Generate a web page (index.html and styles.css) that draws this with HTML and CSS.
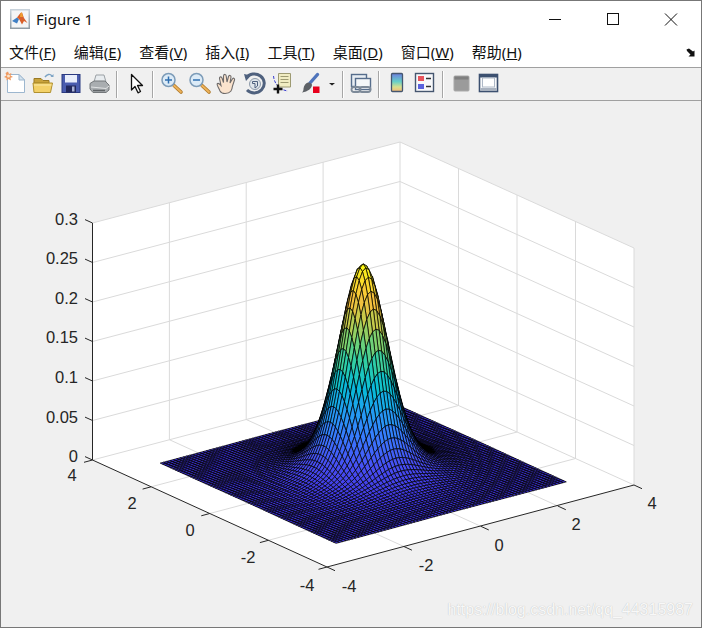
FILE: index.html
```html
<!DOCTYPE html>
<html lang="zh">
<head>
<meta charset="utf-8">
<title>Figure 1</title>
<link rel="stylesheet" href="styles.css">
</head>
<body>
<div class="window">
  <header class="titlebar">
    <svg class="app-icon" width="20" height="20" viewBox="0 0 20 20">
      <defs><linearGradient id="frameG" x1="0" y1="0" x2="0" y2="1"><stop offset="0" stop-color="#c9d3dc"/><stop offset="1" stop-color="#8f9aa3"/></linearGradient></defs>
      <rect width="20" height="20" fill="url(#frameG)"/>
      <rect x="1.5" y="1.5" width="17" height="17" fill="#f4f5f6"/>
      <path d="M2 12 L7 8.5 L9 10 L7 14.5 Z" fill="#3f7fc4"/>
      <path d="M7 8.5 L10.5 4 L12 3.5 L14 9 L17.5 14 L14 12 L12 15.5 L9 10 Z" fill="#d9602a"/>
      <path d="M10.5 4 L12 3.5 L13 8 L10 8 Z" fill="#f0a030"/>
    </svg>
    <span class="title">Figure 1</span>
    <div class="controls">
      <div class="ctl"><svg width="14" height="14" viewBox="0 0 14 14"><path d="M1 7.5H13" stroke="#111" fill="none"/></svg></div>
      <div class="ctl"><svg width="14" height="14" viewBox="0 0 14 14"><rect x="1.5" y="1.5" width="11" height="11" stroke="#111" fill="none"/></svg></div>
      <div class="ctl"><svg width="14" height="14" viewBox="0 0 14 14"><path d="M1 1.5L13 13.5M13 1.5L1 13.5" stroke="#111" fill="none"/></svg></div>
    </div>
  </header>

  <nav class="menubar">
    <span class="menu">文件(<u>F</u>)</span>
    <span class="menu">编辑(<u>E</u>)</span>
    <span class="menu">查看(<u>V</u>)</span>
    <span class="menu">插入(<u>I</u>)</span>
    <span class="menu">工具(<u>T</u>)</span>
    <span class="menu">桌面(<u>D</u>)</span>
    <span class="menu">窗口(<u>W</u>)</span>
    <span class="menu">帮助(<u>H</u>)</span>
    <svg class="dock" width="10" height="9" viewBox="0 0 10 9"><path d="M0.5 1.5L3 0.5L7 3.5L8.5 2.5V8.5H2.5L4.5 6.5L1 3Z" fill="#111"/></svg>
  </nav>

  <div class="toolbar">
    <svg class="tool" viewBox="0 0 28 28">
      <path d="M6.500 4.500H18L23.500 10V22.500H6.500Z" fill="#fff" stroke="#9db7cf"/>
      <path d="M18 4.500V10H23.500Z" fill="#d5e3ee" stroke="#9db7cf"/>
      <path d="M7 1.500L8 4L10.500 3L9.500 5.500L12 7L9.500 7.800L10 10.500L7.500 9L5.500 10.500L5.500 8L3 7L5.500 5.500L4.500 3Z" fill="#ef9a60"/>
      <circle cx="7.500" cy="6" r="1.500" fill="#fbe3c9"/>
    </svg>
    <svg class="tool" viewBox="0 0 28 28">
      <path d="M5 8.500H12L14 10.500H20V13H5Z" fill="#c9a33b" stroke="#9a7a25"/>
      <path d="M5 22.500L4 13H23.500L21.500 22.500Z" fill="#f3d168" stroke="#b0902f"/>
      <path d="M5 15H22.500" stroke="#fbeaa6"/>
      <path d="M16 7C18 4 21 3.500 23 6" fill="none" stroke="#7aa2c4" stroke-width="1.400"/>
      <path d="M21.500 7H24.500V4Z" fill="#7aa2c4"/>
    </svg>
    <svg class="tool" viewBox="0 0 28 28">
      <rect x="5" y="4.500" width="18" height="18" fill="#4a5cae" stroke="#2b3a80"/>
      <rect x="8" y="5" width="12" height="7.500" fill="#e9eefb"/>
      <rect x="9" y="15.500" width="10" height="7" fill="#22285c"/>
      <rect x="15" y="16.500" width="2.500" height="5" fill="#aab2d6"/>
    </svg>
    <svg class="tool" viewBox="0 0 28 28">
      <path d="M9 12L11 5H19L21 12Z" fill="#e8ecef" stroke="#9aa0a5"/>
      <path d="M5 13.500L9 11H20L24 15V20L21 22.500H8L5 19Z" fill="#a9adb0" stroke="#74787b"/>
      <path d="M6 17L21 18.500L24 16" stroke="#e0e2e3" fill="none"/>
      <path d="M8 20.500H20" stroke="#5f6366" stroke-width="1.500"/>
    </svg>
    <i class="sep"></i>
    <svg class="tool" viewBox="0 0 28 28">
      <path d="M10.500 4.500V20L14 16.500L17 22.800L19.500 21.500L16.500 15.500H21.500Z" fill="#fff" stroke="#111" stroke-width="1.300" stroke-linejoin="round"/>
    </svg>
    <i class="sep"></i>
    <svg class="tool" viewBox="0 0 28 28">
      <path d="M17 15.500L24 22" stroke="#b07a2a" stroke-width="3.600" stroke-linecap="round"/>
      <path d="M17 15.500L24 22" stroke="#eeb35b" stroke-width="1.800" stroke-linecap="round"/>
      <circle cx="11.500" cy="10" r="6.500" fill="#dcebf7" stroke="#7d9cb8" stroke-width="1.500"/>
      <path d="M8 10H15M11.500 6.500V13.500" stroke="#2f6fb0" stroke-width="1.500"/>
    </svg>
    <svg class="tool" viewBox="0 0 28 28">
      <path d="M17 15.500L24 22" stroke="#b07a2a" stroke-width="3.600" stroke-linecap="round"/>
      <path d="M17 15.500L24 22" stroke="#eeb35b" stroke-width="1.800" stroke-linecap="round"/>
      <circle cx="11.500" cy="10" r="6.500" fill="#dcebf7" stroke="#7d9cb8" stroke-width="1.500"/>
      <path d="M8 10H15" stroke="#2f6fb0" stroke-width="1.500"/>
    </svg>
    <svg class="tool" viewBox="0 0 28 28">
      <path d="M7 21C5.500 17 3 14.500 4.500 13.500C6 12.800 7.500 15 8 15.500L6.500 8.500C6.300 6.500 8.500 6.300 9 8L10.500 12.500L10.500 6C10.800 3.800 13 4 13.200 6L14 12L15.500 6.500C16 4.800 18.200 5.200 18 7L17 13L19.500 8.800C20.600 7.500 22 8.500 21.500 10L19.500 16C19 20 18 23.500 12 23.500C9.500 23.500 8 23 7 21Z" fill="#fbe3cd" stroke="#6d6a6a" stroke-width="1.100"/>
    </svg>
    <svg class="tool" viewBox="0 0 28 28">
      <path d="M5 8A10 9.500 0 1 1 6 20" fill="none" stroke="#4f617e" stroke-width="3"/>
      <path d="M3 4L10 5.500L5 11Z" fill="#4f617e"/>
      <circle cx="14" cy="14" r="5.500" fill="#dfe5ea" stroke="#8e9bab"/>
      <path d="M11.500 11.500H16.500V16L14 18V13.500H11.500Z" fill="none" stroke="#4f617e"/>
    </svg>
    <svg class="tool" viewBox="0 0 28 28">
      <path d="M4.500 6C5 13 10 20 19 21" fill="none" stroke="#3a3fd0" stroke-dasharray="3 1.500"/>
      <path d="M9.500 3.500H21.500V17H9.500Z" fill="#f0ecc2" stroke="#9d9a72"/>
      <path d="M11.500 6.500H19.500M11.500 9.500H19.500M11.500 12.500H19.500" stroke="#9d9a72"/>
      <path d="M9 14.500V23.500M4.500 19H13.500" stroke="#111" stroke-width="2.400"/>
    </svg>
    <svg class="tool" viewBox="0 0 28 28">
      <path d="M13 13L20.500 4.500" stroke="#4f74bb" stroke-width="3.400" stroke-linecap="round"/>
      <path d="M7 16.500C9 11.500 13 11.500 15 14.500C15 18.500 11 21.500 5 22.500C7 21 6 19 7 16.500Z" fill="#5d6166"/>
      <rect x="16" y="16.500" width="6.500" height="6.500" fill="#e8001c"/>
    </svg>
    <svg class="tool-arrow" width="14" height="28" viewBox="0 0 14 28"><path d="M4 13H10L7 15.500Z" fill="#222"/></svg>
    <i class="sep"></i>
    <svg class="tool" viewBox="0 0 28 28">
      <rect x="4.500" y="4.500" width="15" height="12" fill="#e7edf3" stroke="#566d8c" stroke-width="1.400"/>
      <rect x="8.500" y="8.500" width="15" height="11" fill="#f3f6f8" stroke="#566d8c" stroke-width="1.400"/>
      <rect x="4.500" y="17" width="9" height="5" rx="2.500" fill="none" stroke="#7d8a99" stroke-width="1.800"/>
      <rect x="12.500" y="17" width="11" height="5" rx="2.500" fill="none" stroke="#7d8a99" stroke-width="1.800"/>
    </svg>
    <i class="sep"></i>
    <svg class="tool" viewBox="0 0 28 28">
      <defs><linearGradient id="cbarG" x1="0" y1="0" x2="0" y2="1"><stop offset="0" stop-color="#6d7fe0"/><stop offset=".45" stop-color="#66cfc8"/><stop offset=".75" stop-color="#d8e08e"/><stop offset="1" stop-color="#f5b878"/></linearGradient></defs>
      <rect x="8.500" y="3.500" width="11" height="18" rx="1" fill="url(#cbarG)" stroke="#45566f" stroke-width="1.300"/>
    </svg>
    <svg class="tool" viewBox="0 0 28 28">
      <rect x="4.500" y="3.500" width="18" height="18" fill="#f7f8fa" stroke="#45566f" stroke-width="1.400"/>
      <rect x="7" y="6" width="6" height="5" fill="#e8545c"/>
      <rect x="7" y="14" width="6" height="5" fill="#5a62dd"/>
      <path d="M15 8.500H20M15 16.500H20" stroke="#333" stroke-width="1.500"/>
    </svg>
    <i class="sep"></i>
    <svg class="tool" viewBox="0 0 28 28">
      <rect x="7" y="6" width="15" height="15" rx="1" fill="#9b9b9b" stroke="#a9a9a9"/>
      <rect x="7.500" y="6.500" width="14" height="3" fill="#7f7f7f"/>
    </svg>
    <svg class="tool" viewBox="0 0 28 28">
      <rect x="4.500" y="4.500" width="18" height="17" fill="#f7f8fa" stroke="#3c5070" stroke-width="1.600"/>
      <rect x="4.500" y="4.500" width="18" height="3" fill="#3c5070"/>
      <rect x="7.500" y="8" width="12" height="9" fill="#fff" stroke="#aeb8c6"/>
      <rect x="5.500" y="18" width="16" height="3" fill="#a9b2bf"/>
    </svg>
  </div>

  <main class="figure">
    <svg class="plot" width="700" height="526" viewBox="1 101 700 526">
      <polygon class="wall" points="92.5,223 400,142 634,248 634,485 327,567 92.5,460"/>
      <g class="grid">
        <path d="M92.500 223L400 142L634 248"/>
        <path d="M92.500 262.500L400 181.500L634 287.500"/>
        <path d="M92.500 302L400 221L634 327"/>
        <path d="M92.500 341.500L400 260.500L634 366.500"/>
        <path d="M92.500 381L400 300L634 406"/>
        <path d="M92.500 420.500L400 339.500L634 445.500"/>
        <path d="M92.500 460L400 379L634 485"/>
        <path d="M169.400 202.700V439.700M246.200 182.500V419.500M323.100 162.200V399.200M400 142V379"/>
        <path d="M458.500 168.500V405.500M517 195V432M575.500 221.500V458.500M634 248V485"/>
        <path d="M151.100 486.800L458.500 405.500M209.750 513.500L517 432M268.400 540.300L575.500 458.500"/>
        <path d="M169.400 439.700L403.900 546.500M246.200 419.500L480.750 526.250M323.100 399.200L557.800 506"/>
      </g>
      <g id="surface" class="surface"></g>
      <path class="axis" d="M92.500 223V460L327 567L634 485"/>
      <g class="axis-ticks">
        <path d="M92.500 223L85 219.600M92.500 262.500L85 259.100M92.500 302L85 298.600M92.500 341.500L85 338.100M92.500 381L85 377.600M92.500 420.500L85 417.100M92.500 460L85 456.600"/>
        <path d="M92.500 460L84 462.300M151.100 486.800L142.600 489.100M209.750 513.500L201.250 515.800M268.400 540.300L259.900 542.600M327 567L318.500 569.300"/>
        <path d="M327 567L335 570.700M403.900 546.500L411.900 550.200M480.750 526.250L488.750 529.950M557.800 506L565.800 509.700M634 485L642 488.700"/>
      </g>
      <g class="labels">
        <text x="78" y="225">0.3</text>
        <text x="78" y="264">0.25</text>
        <text x="78" y="304">0.2</text>
        <text x="78" y="343">0.15</text>
        <text x="78" y="383">0.1</text>
        <text x="78" y="423">0.05</text>
        <text x="78" y="462">0</text>
      </g>
      <g class="labels-mid">
        <text x="72" y="481">4</text>
        <text x="132" y="509">2</text>
        <text x="190" y="536">0</text>
        <text x="248" y="563">-2</text>
        <text x="307" y="591">-4</text>
        <text x="349" y="592">-4</text>
        <text x="426" y="571">-2</text>
        <text x="499" y="551">0</text>
        <text x="576" y="530">2</text>
        <text x="652" y="509">4</text>
      </g>
    </svg>
    <span class="watermark">https://blog.csdn.net/qq_44315987</span>
  </main>
</div>
<script src="plot.js"></script>
</body>
</html>
```

FILE: styles.css
```css
* { box-sizing: border-box; }
html, body { margin: 0; padding: 0; }
body { width: 702px; height: 628px; overflow: hidden; background: #f0f0f0; }

.window {
  width: 702px;
  height: 628px;
  display: flex;
  flex-direction: column;
  border: 1px solid #777;
  background: #f0f0f0;
  font-family: "Noto Sans", "Noto Sans CJK SC", sans-serif;
  color: #111;
}

.titlebar {
  height: 39px;
  display: flex;
  align-items: center;
  padding: 0 1px 3px 9px;
  background: #fff;
  flex: none;
}
.app-icon { margin-right: 6px; }
.title { font-size: 15px; }
.controls { margin-left: auto; display: flex; }
.ctl { width: 58px; height: 36px; display: flex; align-items: center; justify-content: center; }

.menubar {
  height: 28px;
  display: flex;
  align-items: center;
  gap: 18px;
  padding: 0 5px 3px 8px;
  background: #fff;
  border-bottom: 1px solid #a0a0a0;
  flex: none;
}
.menu { font-size: 15px; line-height: 20px; white-space: nowrap; }
.dock { margin-left: auto; }

.toolbar {
  height: 33px;
  display: flex;
  align-items: center;
  background: #f0f0f0;
  border-bottom: 1px solid #a0a0a0;
  flex: none;
}
.tool { width: 28px; height: 28px; flex: none; }
.tool-arrow { flex: none; }
.sep {
  width: 2px;
  height: 27px;
  margin: 0 3px 0 3px;
  background: #a6a6a6;
  border-right: 1px solid #fff;
  flex: none;
}

.figure { position: relative; flex: 1; background: #f0f0f0; }
.plot { display: block; }
.wall { fill: #fff; }
.grid path { fill: none; stroke: #dadada; stroke-width: 1; }
.surface polygon { stroke: #000; stroke-width: 0.72; stroke-linejoin: round; }
.surface polygon.edge { stroke-width: 1.5; }
.axis { fill: none; stroke: #262626; stroke-width: 1; }
.axis-ticks path { fill: none; stroke: #262626; stroke-width: 1; }
.labels text, .labels-mid text {
  font-family: "Liberation Sans", Arial, sans-serif;
  font-size: 16.5px;
  fill: #262626;
}
.labels text { text-anchor: end; }
.labels-mid text { text-anchor: middle; }

.watermark {
  position: absolute;
  right: 8px;
  bottom: 8px;
  font-family: "Liberation Sans", Arial, sans-serif;
  font-size: 16px;
  color: #f8f8f8;
  text-shadow: 0 0 1px #b4b4b4;
  white-space: nowrap;
}
```

FILE: plot.js
```js
(function () {
  var svgNS = "http://www.w3.org/2000/svg";
  var group = document.getElementById("surface");
  var N = 70, STEP = 6 / N, MAX = 0.264, EDGE_AREA = 3.2;

  var PARULA = [
    [.2500,.2000,.8800],[.2796,.3100,.9600],[.2215,.4756,1],[.1329,.6200,.9514],
    [.0282,.7347,.8460],[.1802,.8076,.6548],[.4669,.8230,.4456],[.7594,.7930,.2961],
    [.9700,.7500,.2350],[.9800,.8700,.1600],[.9863,.9931,.0538]
  ];
  function colour(t) {
    t = Math.max(0, Math.min(1, t)) * 10;
    var i = Math.min(9, Math.floor(t)), f = t - i, a = PARULA[i], b = PARULA[i + 1];
    return "rgb(" + [0, 1, 2].map(function (k) {
      return Math.round((a[k] + (b[k] - a[k]) * f) * 255);
    }).join(",") + ")";
  }
  function height(x, y) {
    var r2 = x * x + y * y;
    return MAX * (0.86 * Math.exp(-r2 / (2 * 0.49 * 0.49)) + 0.14 * Math.exp(-r2 / (2 * 1.0 * 1.0)));
  }
  function project(x, y) {
    var u = (x + 4) / 8, v = (y + 4) / 8;
    return [327 + u * 307 - v * 234.5, 567 - u * 82 - v * 107 - height(x, y) / 0.3 * 237];
  }
  function area(q) {
    var s = 0;
    for (var k = 0; k < 4; k++) {
      var a = q[k], b = q[(k + 1) % 4];
      s += a[0] * b[1] - b[0] * a[1];
    }
    return Math.abs(s) / 2;
  }
  var frag = document.createDocumentFragment();
  for (var i = N - 1; i >= 0; i--) {
    for (var j = N - 1; j >= 0; j--) {
      var x0 = -3 + i * STEP, x1 = x0 + STEP, y0 = -3 + j * STEP, y1 = y0 + STEP;
      var quad = [project(x0, y0), project(x1, y0), project(x1, y1), project(x0, y1)];
      var p = document.createElementNS(svgNS, "polygon");
      p.setAttribute("points", quad.map(function (c) { return c[0].toFixed(2) + "," + c[1].toFixed(2); }).join(" "));
      p.setAttribute("fill", colour(height(x0, y0) / MAX));
      if (area(quad) < EDGE_AREA) p.setAttribute("class", "edge");
      frag.appendChild(p);
    }
  }
  group.appendChild(frag);
})();
```
